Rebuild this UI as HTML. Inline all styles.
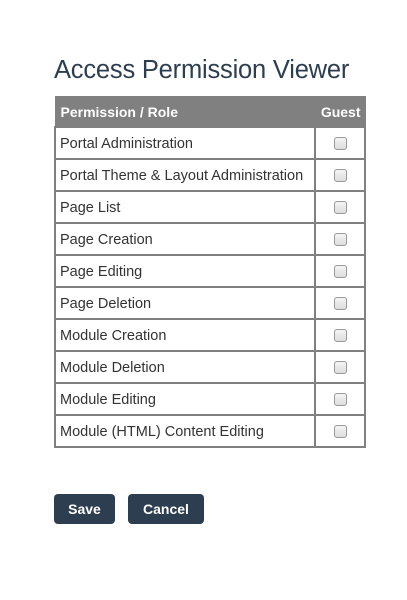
<!DOCTYPE html>
<html><head><style>
body{margin:0;background:#fff;font-family:"Liberation Sans",sans-serif;width:407px;height:600px;position:relative;overflow:hidden}
h1{position:absolute;left:54px;top:56px;margin:0;font-weight:normal;font-size:25.5px;color:#2c3e50;letter-spacing:-0.2px}
table{position:absolute;left:54px;top:96px;border-collapse:collapse;width:312px}
th{background:#808080;color:#fff;font-size:14px;height:29px;text-align:left;padding:0 5px;border:1px solid #808080}
th.g{text-align:right;padding-right:4px}
td{border:2px solid #808080;height:30px;box-sizing:border-box;font-size:14.5px;color:#333;padding:2px 4px 0}
td{height:32px}
td.c{width:46px;text-align:center;padding:0}
.cb{display:inline-block;width:11px;height:11px;border:1px solid #999;border-radius:3px;background:linear-gradient(#f4f4f4,#ddd);vertical-align:middle}
.btn{position:absolute;top:494px;height:30px;background:#2c3e50;color:#fff;font-weight:bold;font-size:14px;border-radius:4px;text-align:center;line-height:30px}
</style></head><body>
<h1>Access Permission Viewer</h1>
<table>
<tr><th>Permission / Role</th><th class="g">Guest</th></tr>
<tr><td>Portal Administration</td><td class="c"><span class="cb"></span></td></tr>
<tr><td>Portal Theme &amp; Layout Administration</td><td class="c"><span class="cb"></span></td></tr>
<tr><td>Page List</td><td class="c"><span class="cb"></span></td></tr>
<tr><td>Page Creation</td><td class="c"><span class="cb"></span></td></tr>
<tr><td>Page Editing</td><td class="c"><span class="cb"></span></td></tr>
<tr><td>Page Deletion</td><td class="c"><span class="cb"></span></td></tr>
<tr><td>Module Creation</td><td class="c"><span class="cb"></span></td></tr>
<tr><td>Module Deletion</td><td class="c"><span class="cb"></span></td></tr>
<tr><td>Module Editing</td><td class="c"><span class="cb"></span></td></tr>
<tr><td>Module (HTML) Content Editing</td><td class="c"><span class="cb"></span></td></tr>
</table>
<div class="btn" style="left:54px;width:61px">Save</div>
<div class="btn" style="left:128px;width:76px">Cancel</div>
</body></html>
